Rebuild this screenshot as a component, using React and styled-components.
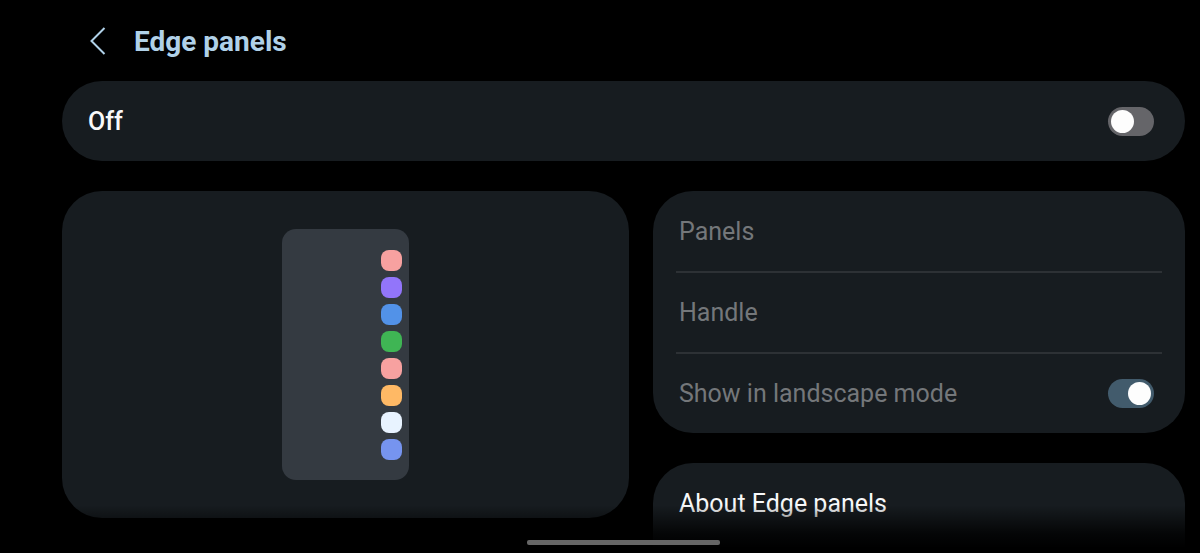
import React, { useState } from "react";
import styled, { createGlobalStyle } from "styled-components";

const GlobalStyle = createGlobalStyle`
  *, *::before, *::after { box-sizing: border-box; }
  body {
    margin: 0;
    background: #000;
    color: #f8f9fa;
    font-family: Roboto, "Liberation Sans", sans-serif;
    font-size: 25px;
    line-height: 32px;
  }
`;

const Screen = styled.div`
  position: relative;
  height: 100vh;
  overflow: hidden;
  padding: 0 15px 0 62px;
`;

const Header = styled.header`
  display: flex;
  align-items: center;
  gap: 24px;
  height: 81px;
  padding-left: 24px;
`;

const BackButton = styled.button`
  display: flex;
  padding: 0;
  border: 0;
  background: none;
  color: #b0d1e8;
  cursor: pointer;
`;

const Title = styled.h1`
  margin: 0;
  padding-top: 2px;
  color: #b0d1e8;
  font-size: 28px;
  font-weight: 700;
`;

const Card = styled.section`
  border-radius: 40px;
  background: #171c20;
`;

const AboutCard = styled(Card)`
  min-height: 160px;
`;

const Columns = styled.main`
  display: grid;
  grid-template-columns: 567fr 532fr;
  align-items: start;
  gap: 24px;
  margin-top: 30px;
`;

const SideColumn = styled.div`
  display: flex;
  flex-direction: column;
  gap: 30px;
`;

const Row = styled.div`
  display: flex;
  align-items: center;
  justify-content: space-between;
  height: 80px;
  padding: 0 31px 0 26px;
  color: ${(p) => (p.$dimmed ? "#74777a" : "#f8f9fa")};
  font-weight: ${(p) => (p.$strong ? 500 : 400)};
`;

const RowLabel = styled.label`
  padding-top: 2px;
`;

const RowButton = styled.button`
  flex: 1;
  align-self: stretch;
  padding: 2px 0 0;
  border: 0;
  background: none;
  color: inherit;
  font: inherit;
  text-align: left;
`;

const Divider = styled.hr`
  height: 2px;
  margin: 0 23px -1px;
  border: 0;
  background: #2d3135;
`;

const Switch = styled.input`
  appearance: none;
  display: flex;
  align-items: center;
  width: 46px;
  height: 29px;
  margin: 0;
  padding: 0 3px;
  border-radius: 15px;
  background: #656569;
  cursor: pointer;

  &::before {
    content: "";
    width: 23px;
    height: 23px;
    border-radius: 50%;
    background: #fdfdfd;
  }

  &:checked {
    justify-content: flex-end;
    background: #425b6c;
  }
`;

const Preview = styled(Card)`
  display: flex;
  justify-content: center;
  padding: 38px;
`;

const Phone = styled.div`
  display: flex;
  flex-direction: column;
  align-items: flex-end;
  gap: 6px;
  width: 127px;
  padding: 21px 7px 20px;
  border-radius: 14px;
  background: #343a41;
`;

const AppDot = styled.span`
  width: 21px;
  height: 21px;
  border-radius: 8px;
  background: ${(p) => p.$color};
`;

const BottomFade = styled.div`
  position: absolute;
  inset: auto 0 0;
  height: 48px;
  background: linear-gradient(transparent, rgba(0, 0, 0, 0.8) 60%, #000 90%);
  pointer-events: none;
`;

const HomeIndicator = styled.div`
  position: absolute;
  inset: auto 15px 8px 62px;
  width: 193px;
  height: 5px;
  margin: 0 auto;
  border-radius: 2px;
  background: #666;
`;

const appColors = [
  "#f7a1a0", "#9275fa", "#5292e8", "#3fb554",
  "#f7a1a0", "#ffb965", "#e8f3ff", "#7694ef",
];

export default function App() {
  const [enabled, setEnabled] = useState(false);
  const [landscape, setLandscape] = useState(true);

  return (
    <>
      <GlobalStyle />
      <Screen>
        <Header>
          <BackButton type="button" aria-label="Back">
            <svg width="24" height="32" viewBox="0 0 24 32" fill="none" stroke="currentColor" strokeWidth="2">
              <path d="M18.5 3 5.5 16 18.5 29" />
            </svg>
          </BackButton>
          <Title>Edge panels</Title>
        </Header>

        <Card>
          <Row $strong>
            <RowLabel htmlFor="edge-panels">{enabled ? "On" : "Off"}</RowLabel>
            <Switch
              id="edge-panels"
              type="checkbox"
              role="switch"
              checked={enabled}
              onChange={(e) => setEnabled(e.target.checked)}
            />
          </Row>
        </Card>

        <Columns>
          <Preview aria-label="Preview">
            <Phone>
              {appColors.map((color, i) => (
                <AppDot key={i} $color={color} />
              ))}
            </Phone>
          </Preview>

          <SideColumn>
            <Card>
              <Row $dimmed>
                <RowButton type="button">Panels</RowButton>
              </Row>
              <Divider />
              <Row $dimmed>
                <RowButton type="button">Handle</RowButton>
              </Row>
              <Divider />
              <Row $dimmed>
                <RowLabel htmlFor="landscape">Show in landscape mode</RowLabel>
                <Switch
                  id="landscape"
                  type="checkbox"
                  role="switch"
                  checked={landscape}
                  onChange={(e) => setLandscape(e.target.checked)}
                />
              </Row>
            </Card>
            <AboutCard>
              <Row>
                <RowButton type="button">About Edge panels</RowButton>
              </Row>
            </AboutCard>
          </SideColumn>
        </Columns>

        <BottomFade />
        <HomeIndicator />
      </Screen>
    </>
  );
}
